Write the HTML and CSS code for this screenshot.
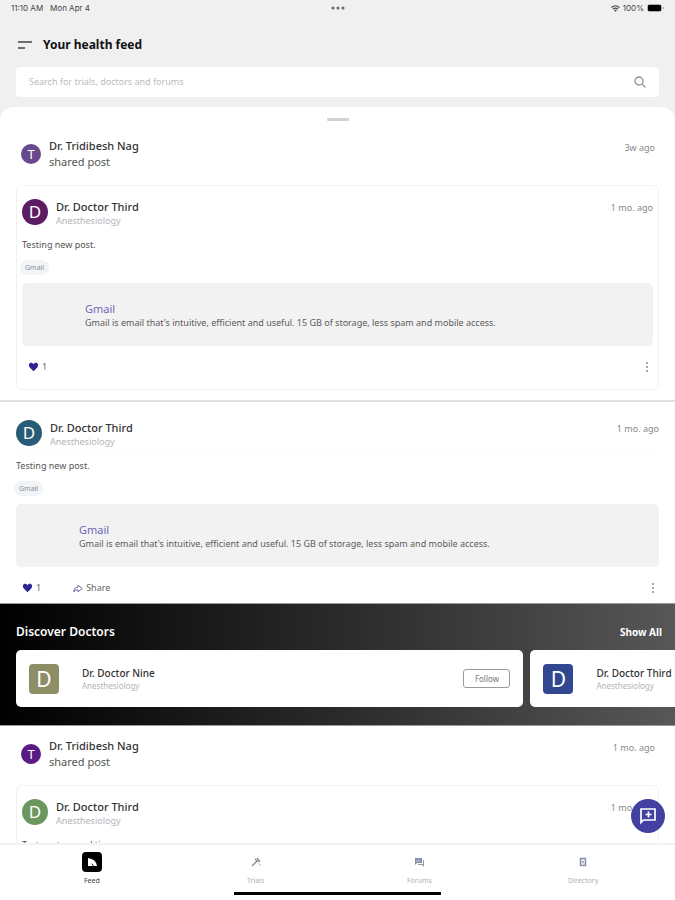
FILE: index.html
```html
<!DOCTYPE html>
<html lang="en">
<head>
<meta charset="utf-8">
<meta name="viewport" content="width=device-width, initial-scale=1">
<title>Your health feed</title>
<link rel="stylesheet" href="styles.css">
</head>
<body>
<svg class="defs" aria-hidden="true">
  <symbol id="heart" viewBox="0 0 24 24"><path fill="currentColor" d="M12 22 3 13C-1 8.500 1 2 6.500 2 9 2 11 3.500 12 5.500 13 3.500 15 2 17.500 2 23 2 25 8.500 21 13z"/></symbol>
  <symbol id="more" viewBox="0 0 4 12"><g fill="currentColor"><circle cx="2" cy="2" r="1"/><circle cx="2" cy="6" r="1"/><circle cx="2" cy="10" r="1"/></g></symbol>
</svg>

<header class="top">
  <div class="status">
    <div class="status-left"><span>11:10 AM</span><span>Mon Apr 4</span></div>
    <svg class="dots" viewBox="0 0 14 4" aria-hidden="true"><g fill="#666"><circle cx="2" cy="2" r="1.500"/><circle cx="7" cy="2" r="1.500"/><circle cx="12" cy="2" r="1.500"/></g></svg>
    <div class="status-right">
      <svg class="wifi" viewBox="0 0 18 14" aria-hidden="true"><g fill="none" stroke="#444" stroke-width="2.400"><path d="M1 5Q9-2 17 5"/><path d="M4 8.500Q9 4 14 8.500"/></g><path fill="#444" d="m6 10.500 3 3 3-3Q9 8 6 10.500z"/></svg>
      <span>100%</span>
      <svg class="battery" viewBox="0 0 17 8" aria-hidden="true"><rect x=".5" y=".5" width="14" height="7" rx="2" fill="#fff" stroke="#aaa"/><rect x="1" y="1" width="13" height="6" rx="1" fill="#000"/><path d="M16 3v2" stroke="#999"/></svg>
    </div>
  </div>
  <div class="title-row">
    <button class="icon-button" aria-label="Menu"><svg class="menu" viewBox="0 0 14 8"><path d="M0 1h14M0 7h7" stroke="#444" stroke-width="1.600"/></svg></button>
    <h1>Your health feed</h1>
  </div>
  <form class="search">
    <input type="search" aria-label="Search" placeholder="Search for trials, doctors and forums">
    <button class="icon-button" type="button" aria-label="Search"><svg class="lens" viewBox="0 0 12 12"><g fill="none" stroke="#8f929c" stroke-width="1.300"><circle cx="5" cy="5" r="4"/><path d="m8 8 3.500 3.500"/></g></svg></button>
  </form>
</header>

<main class="feed">
  <div class="handle"></div>

  <section class="shared">
    <div class="sharer">
      <span class="avatar small violet">T</span>
      <div class="who"><h2>Dr. Tridibesh Nag</h2><p class="action">shared post</p></div>
      <time>3w ago</time>
    </div>
    <article class="post card">
      <div class="author">
        <span class="avatar plum">D</span>
        <div class="who"><h2>Dr. Doctor Third</h2><p class="field">Anesthesiology</p></div>
        <time>1 mo. ago</time>
      </div>
      <p class="text">Testing new post.</p>
      <span class="chip">Gmail</span>
      <div class="preview"><a href="#">Gmail</a><p>Gmail is email that's intuitive, efficient and useful. 15 GB of storage, less spam and mobile access.</p></div>
      <div class="actions">
        <button class="like"><svg class="heart"><use href="#heart"/></svg>1</button>
        <button class="more" aria-label="More"><svg><use href="#more"/></svg></button>
      </div>
    </article>
  </section>

  <article class="post plain">
    <div class="author">
      <span class="avatar teal">D</span>
      <div class="who"><h2>Dr. Doctor Third</h2><p class="field">Anesthesiology</p></div>
      <time>1 mo. ago</time>
    </div>
    <p class="text">Testing new post.</p>
    <span class="chip">Gmail</span>
    <div class="preview"><a href="#">Gmail</a><p>Gmail is email that's intuitive, efficient and useful. 15 GB of storage, less spam and mobile access.</p></div>
    <div class="actions">
      <button class="like"><svg class="heart"><use href="#heart"/></svg>1</button>
      <button class="share"><svg viewBox="0 0 20 16"><path fill="none" stroke="#5b52a8" stroke-width="1.700" stroke-linejoin="round" d="M10 1.500 18.500 8 10 14.500V11H6Q2 11 2 15 1 6 10 5z"/></svg>Share</button>
      <button class="more" aria-label="More"><svg><use href="#more"/></svg></button>
    </div>
  </article>

  <section class="discover">
    <div class="discover-head"><h2>Discover Doctors</h2><a href="#">Show All</a></div>
    <div class="doctors">
      <div class="doctor">
        <span class="avatar square olive">D</span>
        <div class="who"><h3>Dr. Doctor Nine</h3><p class="field">Anesthesiology</p></div>
        <button class="follow">Follow</button>
      </div>
      <div class="doctor">
        <span class="avatar square blue">D</span>
        <div class="who"><h3>Dr. Doctor Third</h3><p class="field">Anesthesiology</p></div>
      </div>
    </div>
  </section>

  <section class="shared">
    <div class="sharer">
      <span class="avatar small purple">T</span>
      <div class="who"><h2>Dr. Tridibesh Nag</h2><p class="action">shared post</p></div>
      <time>1 mo. ago</time>
    </div>
    <article class="post card">
      <div class="author">
        <span class="avatar green">D</span>
        <div class="who"><h2>Dr. Doctor Third</h2><p class="field">Anesthesiology</p></div>
        <time>1 mo. ago</time>
      </div>
      <p class="text">Test post second time</p>
    </article>
  </section>
</main>

<button class="compose" aria-label="New post"><svg viewBox="0 0 18 18"><path fill="none" stroke="#fff" stroke-width="1.700" d="M2 15.500V2h14v11H4.500z"/><path stroke="#fff" stroke-width="1.700" d="M9.500 4.500v6M6.500 7.500h6"/></svg></button>

<nav class="tabs">
  <a href="#" class="tab active"><span class="tab-icon"><svg viewBox="0 0 12 12"><path fill="#fff" d="M2 2q8 1 9 8H8Q7 8 5 7l2 3H2z"/></svg></span>Feed</a>
  <a href="#" class="tab"><span class="tab-icon"><svg viewBox="0 0 12 12"><path d="m2 10 5-5M5 3l3 3M7 2l3 4" fill="none" stroke="#858a98" stroke-width="1.300"/><path d="M8 8h2v2" fill="none" stroke="#c4c7ce"/></svg></span>Trials</a>
  <a href="#" class="tab"><span class="tab-icon"><svg viewBox="0 0 12 12"><path fill="#858ca3" d="M2 2h7v5H4L2 9z"/><path fill="#969cae" d="M10 4h1v7L9 9H5V8h5z"/><path d="M3 4h5M3 5.500h4" stroke="#c9ccd7" stroke-width=".6"/></svg></span>Forums</a>
  <a href="#" class="tab"><span class="tab-icon"><svg viewBox="0 0 12 12"><rect x="3.500" y="2.500" width="5" height="7" fill="#e8eaf0" stroke="#858ca3" stroke-width="1.400"/><path d="M5 5h2v2H5z" fill="#aeb3c1"/></svg></span>Directory</a>
</nav>
<div class="home"></div>
</body>
</html>
```
FILE: styles.css
```css
* { box-sizing: border-box; }

body {
  margin: 0;
  height: 100vh;
  display: flex;
  flex-direction: column;
  overflow: hidden;
  position: relative;
  background: #f0f0f0;
  color: #222;
  font-family: "Noto Sans", "Open Sans", sans-serif;
  font-size: 9px;
  line-height: 12px;
}

h1, h2, h3, p { margin: 0; }
a { color: inherit; text-decoration: none; }
svg { display: block; }
.defs { position: absolute; width: 0; height: 0; }

button {
  border: 0;
  padding: 0;
  background: none;
  color: inherit;
  font: inherit;
}

.top { flex: none; padding: 0 16px 10px; }

.status {
  display: grid;
  grid-template-columns: 1fr auto 1fr;
  align-items: center;
  height: 16px;
  margin: 0 -5px;
  font-family: Inter, sans-serif;
  font-size: 8px;
  color: #444;
}
.status-left { display: flex; gap: 7px; }
.status-right { display: flex; gap: 3px; align-items: center; justify-content: flex-end; }
.dots { width: 14px; height: 4px; }
.wifi { width: 9px; height: 7px; }
.battery { width: 17px; height: 8px; }

.title-row { display: flex; align-items: center; gap: 11px; height: 51px; padding: 7px 2px 0; }
.menu { width: 14px; height: 8px; }
h1 { font-size: 12px; line-height: 20px; font-weight: 700; color: #111; }

.search {
  display: flex;
  align-items: center;
  height: 30px;
  padding: 0 13px;
  border-radius: 4px;
  background: #fff;
}
.search input {
  flex: 1;
  min-width: 0;
  border: 0;
  padding: 0;
  outline: 0;
  background: none;
  font: inherit;
}
.search input::placeholder { color: #bbb; opacity: 1; }
.lens { width: 12px; height: 12px; }

.feed {
  flex: 1;
  min-height: 0;
  overflow: hidden;
  border-radius: 14px 14px 0 0;
  background: #fff;
}
.handle {
  width: 22px;
  height: 3px;
  margin: 11px auto 5px;
  border-radius: 1px;
  background: #d0d3d6;
}

.shared { padding: 12px 16px 10px; border-bottom: 2px solid #e0e0e0; }
.sharer, .author { display: flex; align-items: flex-start; }
.sharer { gap: 8px; padding: 0 4px 0 5px; height: 47px; }
.sharer .avatar { margin-top: 6px; }
.sharer time { padding-top: 2px; }
.who { flex: 1; min-width: 0; }
h2, h3 { font-size: 11px; line-height: 16px; font-weight: 500; color: #333; }
.action { font-size: 11px; line-height: 16px; color: #555; }
.field { color: #b2b5ba; line-height: 12px; }
time { line-height: 16px; color: #888; }

.avatar {
  display: flex;
  flex: none;
  align-items: center;
  justify-content: center;
  width: 26px;
  height: 26px;
  border-radius: 50%;
  color: #fff;
  font-size: 17px;
  line-height: 24px;
}
.small { width: 20px; height: 20px; font-size: 13px; line-height: 18px; }
.square { width: 30px; height: 30px; border-radius: 4px; font-size: 21px; line-height: 28px; }
.violet { background: #684a8c; }
.plum { background: #5b1c63; }
.teal { background: #285b76; }
.olive { background: #8d8d66; }
.blue { background: #31478f; }
.purple { background: #5a1a84; }
.green { background: #6c965f; }

.card { padding: 13px 5px 8px; border: 1px solid #f1f1f1; border-radius: 6px; }
.plain { padding: 18px 16px 1px; }
.author { gap: 8px; height: 35px; }
.author time { padding-top: 1px; }
.plain .author { border-bottom: 1px solid #fafafa; }
.text { padding-top: 3px; line-height: 16px; color: #555; }
.chip {
  display: block;
  width: max-content;
  margin: 7px 0 8px -2px;
  padding: 0 5px;
  border-radius: 7px;
  background: #f2f4f6;
  color: #88919c;
  font-size: 7px;
  line-height: 15px;
}
.preview {
  min-height: 63px;
  padding: 18px 20px 16px 63px;
  border-radius: 5px;
  background: #f2f2f2;
  color: #5c5c5c;
  line-height: 13px;
}
.preview a { display: block; font-size: 11px; line-height: 15px; color: #7166b4; }
.actions { display: flex; align-items: center; gap: 32px; height: 28px; margin-top: 7px; padding: 0 4px 0 6px; color: #666; }
.like, .share { display: flex; align-items: center; gap: 3px; }
.heart { width: 11px; height: 10px; color: #2e2593; }
.share svg { width: 10px; height: 9px; }
.more { margin-left: auto; }
.more svg { width: 4px; height: 12px; color: #888; }

.discover {
  padding: 18px 0 18px 16px;
  overflow: hidden;
  border-top: 1px solid #999;
  border-bottom: 1px solid #999;
  background: linear-gradient(90deg, #000, #2a2a2a 50%, #575757);
}
.discover-head { display: flex; justify-content: space-between; padding-right: 13px; color: #fff; line-height: 20px; font-size: 10px; font-weight: 700; }
.discover-head h2 { font-size: 12px; line-height: 20px; font-weight: 600; color: #fff; }
.doctors { display: flex; gap: 7px; margin-top: 8px; }
.doctor {
  display: flex;
  flex: 0 0 77%;
  align-items: center;
  height: 57px;
  padding: 0 13px;
  border-radius: 5px;
  background: #fff;
}
.doctor .who { padding-left: 23px; }
.doctor h3 { font-size: 10px; line-height: 13px; }
.doctor .field { font-size: 8px; line-height: 11px; }
.follow {
  width: 47px;
  height: 19px;
  border: 1px solid #999;
  border-radius: 3px;
  color: #777;
  font-size: 8px;
}

.compose {
  position: absolute;
  right: 10px;
  bottom: 67px;
  display: flex;
  align-items: center;
  justify-content: center;
  width: 34px;
  height: 34px;
  border-radius: 50%;
  background: #4240a0;
}
.compose svg { width: 18px; height: 18px; }

.tabs {
  display: flex;
  flex: none;
  padding: 7px 10px 5px;
  border-top: 2px solid #f2f2f2;
  background: #fff;
}
.tab {
  display: flex;
  flex: 1;
  flex-direction: column;
  align-items: center;
  gap: 3px;
  color: #b0b0b4;
  font-size: 7px;
}
.active { color: #444; }
.tab-icon {
  display: flex;
  align-items: center;
  justify-content: center;
  width: 20px;
  height: 20px;
  border-radius: 4px;
}
.active .tab-icon { background: #000; }
.tab-icon svg { width: 12px; height: 12px; }

.home {
  flex: none;
  height: 8px;
  background: linear-gradient(#000, #000) center 0 / 207px 3px no-repeat #fff;
}
```
